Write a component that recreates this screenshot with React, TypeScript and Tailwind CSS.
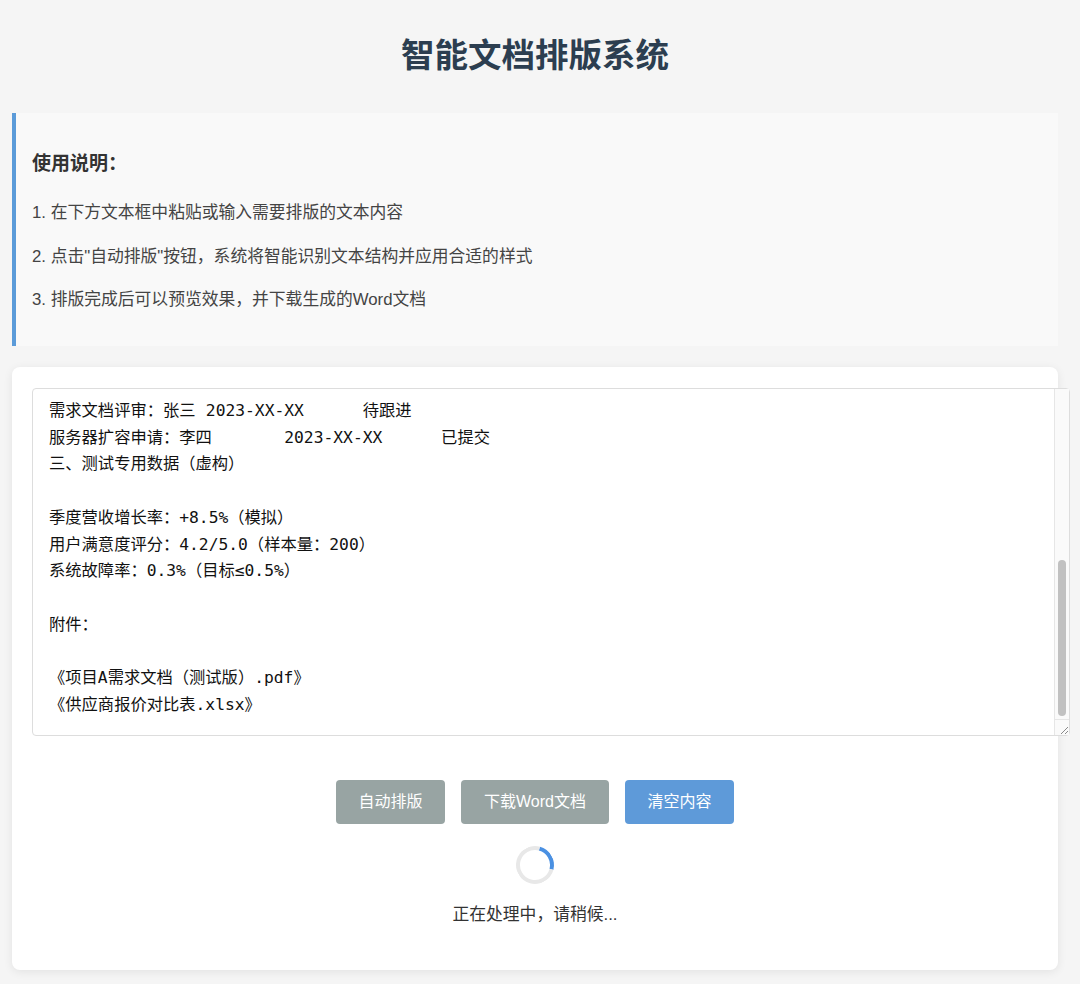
import React from "react";

const CONTENT = [
  "需求文档评审：张三\t2023-XX-XX\t待跟进",
  "服务器扩容申请：李四\t2023-XX-XX\t已提交",
  "三、测试专用数据（虚构）",
  "",
  "季度营收增长率：+8.5%（模拟）",
  "用户满意度评分：4.2/5.0（样本量：200）",
  "系统故障率：0.3%（目标≤0.5%）",
  "",
  "附件：",
  "",
  "《项目A需求文档（测试版）.pdf》",
  "《供应商报价对比表.xlsx》",
].join("\n");

function FakeScrollbar() {
  return (
    <div className="pointer-events-none absolute top-[1px] right-[1px] bottom-[1px] flex w-[15px] flex-col border-l border-[#e6e6e6] bg-[#fafafa]">
      <div className="relative flex-1">
        <div className="absolute top-[171px] left-[3px] h-[156px] w-[8px] rounded-full bg-[#c1c1c1]" />
      </div>
      <div className="relative h-[16px] border-t border-[#e6e6e6]">
        <svg width="15" height="16" viewBox="0 0 15 16" className="absolute top-0 left-0">
          <line x1="13" y1="7" x2="6" y2="14" stroke="#8a8a8a" strokeWidth="1" />
          <line x1="13" y1="11" x2="10" y2="14" stroke="#8a8a8a" strokeWidth="1" />
        </svg>
      </div>
    </div>
  );
}

export default function App() {
  return (
    <div
      className="min-h-[984px] w-full bg-[#f5f5f5] text-[#333]"
      style={{ fontFamily: '"Liberation Sans", "Noto Sans CJK SC", sans-serif' }}
    >
      <div className="ml-[12px] w-[1046px] pt-[36px] pb-[14px]">
        <h1 className="text-center text-[33.5px] font-bold leading-[40px] text-[#2c3e50]">
          智能文档排版系统
        </h1>

        <div className="mt-[37px] h-[233px] border-l-4 border-[#5b9bd9] bg-[#f9f9f9] pl-[16px] pt-[37px]">
          <h3 className="text-[19px] font-bold leading-[28px] text-[#333]">使用说明：</h3>
          <div className="mt-[22px] flex flex-col gap-[17.5px] text-[16.8px] leading-[26px] text-[#444]">
            <p>1. 在下方文本框中粘贴或输入需要排版的文本内容</p>
            <p>2. 点击"自动排版"按钮，系统将智能识别文本结构并应用合适的样式</p>
            <p>3. 排版完成后可以预览效果，并下载生成的Word文档</p>
          </div>
        </div>

        <div className="mt-[21px] rounded-[8px] bg-white px-[20px] pt-[21px] pb-[43px] shadow-[0_2px_10px_rgba(0,0,0,0.08)]">
          <div className="relative w-[calc(100%+32px)]">
            <textarea
              defaultValue={CONTENT}
              spellCheck={false}
              className="block h-[348px] w-full resize-none overflow-hidden rounded-[4px] border border-[#dddddd] bg-white pt-[9px] pr-[32px] pb-[17px] pl-[16px] text-[16.3px] leading-[26.7px] text-[#111] outline-none [tab-size:8]"
              style={{ fontFamily: '"DejaVu Sans Mono", "Noto Sans CJK SC", monospace' }}
            />
            <FakeScrollbar />
          </div>

          <div className="mt-[44px] flex justify-center gap-[16px]">
            <button className="h-[44px] w-[109px] rounded-[4px] bg-[#98a4a3] text-[16px] text-white">
              自动排版
            </button>
            <button className="h-[44px] w-[148px] rounded-[4px] bg-[#98a4a3] text-[16px] text-white">
              下载Word文档
            </button>
            <button className="h-[44px] w-[109px] rounded-[4px] bg-[#5e9ad9] text-[16px] text-white">
              清空内容
            </button>
          </div>

          <div className="mt-[22px] flex flex-col items-center">
            <div className="h-[38px] w-[38px] rotate-[60deg] rounded-full border-4 border-[#e8e8e8] border-t-[#4a90e2]" />
            <p className="mt-[19px] text-[16.8px] leading-[24px] text-[#333]">正在处理中，请稍候...</p>
          </div>
        </div>
      </div>
    </div>
  );
}
